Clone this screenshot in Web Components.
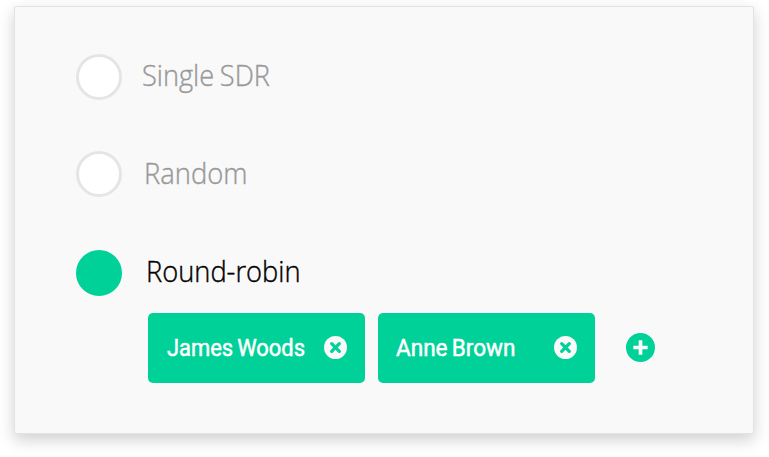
<!DOCTYPE html>
<html lang="en">
<head>
<meta charset="utf-8">
<title>Assignment</title>
<style>
  body { margin: 0; display: flow-root; min-height: 457px; box-sizing: border-box; background: #fff; font-family: "Open Sans", "Noto Sans", sans-serif; }
  person-chip { font-family: Roboto, "Open Sans", sans-serif; }
</style>
</head>
<body>
<assign-panel>
  <radio-option style="height:46px;margin-bottom:51px"><fit-text text="Single SDR" width="128" base="31.5" style="margin-left:19.5px"></fit-text></radio-option>
  <radio-option style="height:46px;margin-bottom:53px"><fit-text text="Random" width="103.5" base="32.5" style="margin-left:21.5px"></fit-text></radio-option>
  <radio-option checked style="height:46px;margin-bottom:17px"><fit-text text="Round-robin" width="154.5" base="31.5" style="margin-left:23.5px"></fit-text></radio-option>
  <chip-row>
    <person-chip><fit-text text="James Woods" width="138" size="24" weight="400" stroke="0.5" base="42.5" style="margin-left:18.5px"></fit-text></person-chip>
    <person-chip><fit-text text="Anne Brown" width="119.5" size="24" weight="400" stroke="0.5" base="42.5" style="margin-left:17.5px"></fit-text></person-chip>
    <add-button></add-button>
  </chip-row>
</assign-panel>
<script>
  const define = (name, html, setup) => customElements.define(name, class extends HTMLElement {
    constructor() {
      super();
      this.attachShadow({ mode: 'open' }).innerHTML = html;
      if (setup) setup(this, this.shadowRoot);
    }
  });

  define('assign-panel', `<style>
    :host { display: block; box-sizing: border-box; width: 740px; height: 428px; margin: 6px 0 0 14px;
      padding: 47px 0 0 61px; background: #f9f9f9; border: 1px solid #e3e3e3; border-radius: 2px;
      box-shadow: 0 6px 16px rgba(0,0,0,.19); }
  </style><slot></slot>`);

  define('radio-option', `<style>
    :host { display: flex; align-items: flex-start; color: #999; }
    i { box-sizing: border-box; width: 46px; height: 46px; border: 3px solid #e5e5e5; border-radius: 50%; background: #fff; }
    :host([checked]) { color: #000; }
    :host([checked]) i { background: #00d198; border-color: #00d198; }
  </style><i></i><slot></slot>`);

  define('chip-row', `<style>
    :host { display: flex; gap: 13px; margin-left: 72px; }
  </style><slot></slot>`);

  define('person-chip', `<style>
    :host { box-sizing: border-box; display: flex; align-items: center; width: 217px; height: 70px;
      padding-right: 17px; border-radius: 5px; background: #00d198; color: #fff; }
    .x { display: block; flex: none; margin-left: auto; }
    ::slotted(*) { align-self: flex-start; }
  </style><slot></slot>
  <svg class="x" width="24" height="24" viewBox="0 0 24 24"><circle cx="11.5" cy="11.5" r="11.5" fill="#f9f9f9"/>
  <path d="M7.7 7.7l7.6 7.6M15.3 7.7l-7.6 7.6" stroke="#00d198" stroke-width="3.3" stroke-linecap="round"/></svg>`);

  define('add-button', `<style>
    :host { display: flex; align-items: center; margin-left: 18px; }
    svg { display: block; }
  </style><svg width="30" height="30" viewBox="0 0 30 30"><circle cx="14.5" cy="14.5" r="14.5" fill="#00d198"/>
  <path d="M7.3 14.5h14.4M14.5 7.3v14.4" stroke="#f9f9f9" stroke-width="3.7"/></svg>`);

  // A label condensed horizontally to a given width, with its baseline at a given height.
  define('fit-text', `<style>
    :host { display: block; }
    svg { display: block; overflow: visible; }
    text { word-spacing: -1.5px; }
  </style><svg height="46"><text x="0" fill="currentColor" stroke="currentColor" lengthAdjust="spacingAndGlyphs"></text></svg>`, (el, root) => {
    const svg = root.querySelector('svg'), t = root.querySelector('text');
    const w = el.getAttribute('width');
    svg.setAttribute('width', w);
    t.setAttribute('textLength', w);
    t.setAttribute('y', el.getAttribute('base'));
    t.setAttribute('font-size', el.getAttribute('size') || '29');
    t.setAttribute('font-weight', el.getAttribute('weight') || '300');
    t.setAttribute('stroke-width', el.getAttribute('stroke') || '0.4');
    t.textContent = el.getAttribute('text');
  });
</script>
</body>
</html>
